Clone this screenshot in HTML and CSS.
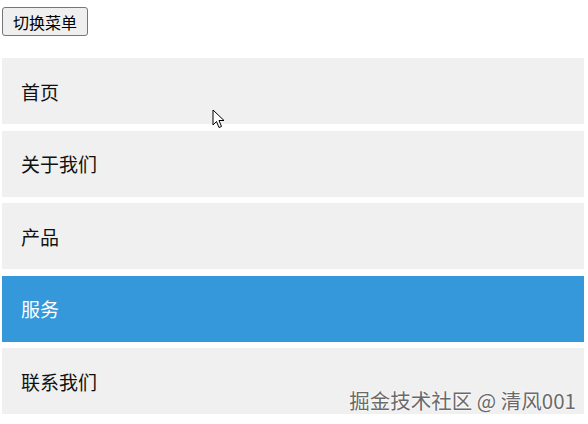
FILE: index.html
```html
<!DOCTYPE html>
<html lang="zh">
<head>
<meta charset="utf-8">
<link rel="stylesheet" href="styles.css">
</head>
<body>
<button class="toggle">切换菜单</button>
<ul class="menu">
  <li class="item">首页</li>
  <li class="item">关于我们</li>
  <li class="item">产品</li>
  <li class="item active">服务</li>
  <li class="item">联系我们</li>
</ul>
<div class="watermark">掘金技术社区 @ 清风001</div>
<svg class="cursor" width="14" height="20" viewBox="0 0 14 20"><path d="M1 1 L1 16 L4.5 12.5 L7 18.5 L9.5 17.5 L7 11.5 L12 11.5 Z" fill="#fff" stroke="#000" stroke-width="1" stroke-linejoin="round"/></svg>
</body>
</html>
```
FILE: styles.css
```css
html, body {
  margin: 0;
  padding: 0;
  background: #fff;
}
body {
  padding: 7px 4px 0 2px;
  font-family: "Noto Sans CJK SC", "Liberation Sans", sans-serif;
  position: relative;
  height: 424px;
  box-sizing: border-box;
  overflow: hidden;
}
.toggle {
  font-family: "Noto Sans CJK SC", sans-serif;
  font-size: 16px;
  height: 29px;
  padding: 0 10px;
  background: #efefef;
  border: 1px solid #767676;
  border-radius: 3px;
  color: #000;
  line-height: 1;
}
.menu {
  list-style: none;
  margin: 22px 0 0 0;
  padding: 0;
  display: flex;
  flex-direction: column;
  gap: 6.5px;
}
.item {
  height: 66px;
  display: flex;
  align-items: center;
  padding-left: 19px;
  background: #f0f0f0;
  color: #111;
  font-size: 19px;
}
.item.active {
  background: #3498db;
  color: #fff;
}
.watermark {
  position: absolute;
  right: 12px;
  top: 385px;
  font-size: 20.5px;
  color: #6a6a6a;
  text-shadow: 0 0 2px #fff, 0 0 2px #fff;
  font-family: "Noto Sans CJK SC", "Liberation Sans", sans-serif;
}
.cursor {
  position: absolute;
  left: 212px;
  top: 109px;
}
```
